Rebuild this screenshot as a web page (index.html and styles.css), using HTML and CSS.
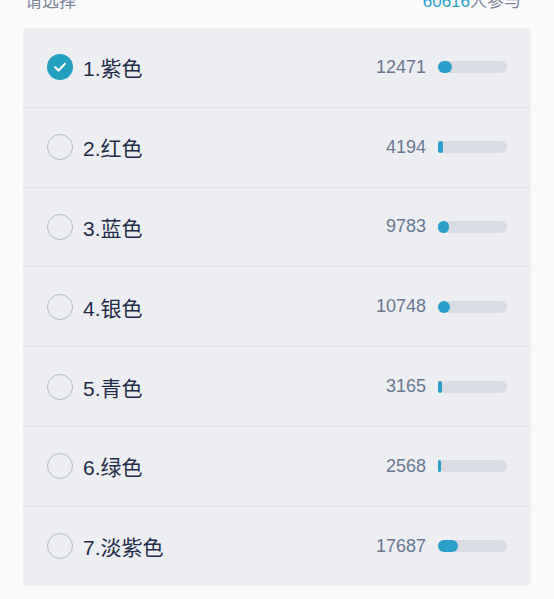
FILE: index.html
```html
<!DOCTYPE html>
<html lang="zh">
<head>
<meta charset="UTF-8">
<meta name="viewport" content="width=device-width, initial-scale=1.0">
<title>投票结果</title>
<link rel="stylesheet" href="styles.css">
</head>
<body>
    <div class="vote">
        <div class="vote-head">
            <span class="vote-hint">请选择</span>
            <span class="vote-total"><em>60616</em>人参与</span>
        </div>
        <ul class="vote-list">
            <li class="vote-item checked">
                <span class="radio">
                    <svg viewBox="0 0 26 26" width="26" height="26"><path d="M8.2 13.3l3.3 3.2 6.3-6.6" fill="none" stroke="#fff" stroke-width="2.2" stroke-linecap="round" stroke-linejoin="round"/></svg>
                </span>
                <span class="label">1.紫色</span>
                <span class="count">12471</span>
                <span class="bar"><span class="fill" style="width: 20.57%"></span></span>
            </li>
            <li class="vote-item">
                <span class="radio"></span>
                <span class="label">2.红色</span>
                <span class="count">4194</span>
                <span class="bar"><span class="fill" style="width: 6.92%"></span></span>
            </li>
            <li class="vote-item">
                <span class="radio"></span>
                <span class="label">3.蓝色</span>
                <span class="count">9783</span>
                <span class="bar"><span class="fill" style="width: 16.14%"></span></span>
            </li>
            <li class="vote-item">
                <span class="radio"></span>
                <span class="label">4.银色</span>
                <span class="count">10748</span>
                <span class="bar"><span class="fill" style="width: 17.73%"></span></span>
            </li>
            <li class="vote-item">
                <span class="radio"></span>
                <span class="label">5.青色</span>
                <span class="count">3165</span>
                <span class="bar"><span class="fill" style="width: 5.22%"></span></span>
            </li>
            <li class="vote-item">
                <span class="radio"></span>
                <span class="label">6.绿色</span>
                <span class="count">2568</span>
                <span class="bar"><span class="fill" style="width: 4.24%"></span></span>
            </li>
            <li class="vote-item">
                <span class="radio"></span>
                <span class="label">7.淡紫色</span>
                <span class="count">17687</span>
                <span class="bar"><span class="fill" style="width: 29.18%"></span></span>
            </li>
        </ul>
    </div>
</body>
</html>
```

FILE: styles.css
```css
html, body {
    margin: 0;
    padding: 0;
    background-color: #fafafb;
    font-family: "Liberation Sans", "Noto Sans CJK SC", sans-serif;
}
.vote {
    padding: 0 23px;
}
.vote-head {
    display: flex;
    justify-content: space-between;
    align-items: center;
    height: 24px;
    margin-top: -13px;
    margin-bottom: 17px;
    padding: 0 10px 0 2px;
    font-size: 17px;
    color: #7c879a;
}
.vote-total em {
    font-style: normal;
    color: #2aa0c8;
}
.vote-list {
    list-style-type: none;
    margin: 0;
    padding: 0;
    background-color: #edeef2;
    border-radius: 5px;
}
.vote-item {
    display: flex;
    align-items: center;
    height: 78.8px;
    padding: 0 24px;
    border-bottom: 1px solid #e1e3e8;
}
.vote-item:last-child {
    border-bottom: none;
}
.radio {
    box-sizing: border-box;
    width: 26px;
    height: 26px;
    border: 1.5px solid #b3bacb;
    border-radius: 50%;
    flex-shrink: 0;
}
.radio svg {
    display: block;
}
.checked .radio {
    border: none;
    background-color: #24a0bf;
}
.label {
    margin-left: 10px;
    flex: 1;
    font-size: 21px;
    color: #1f2d48;
}
.count {
    font-size: 18px;
    color: #6b7891;
    margin-right: 12px;
}
.bar {
    display: block;
    width: 69px;
    height: 12px;
    border-radius: 6px;
    background-color: #d9dde3;
}
.fill {
    display: block;
    min-width: 3px;
    height: 100%;
    border-radius: 6px;
    background-color: #2a9fca;
}
```
